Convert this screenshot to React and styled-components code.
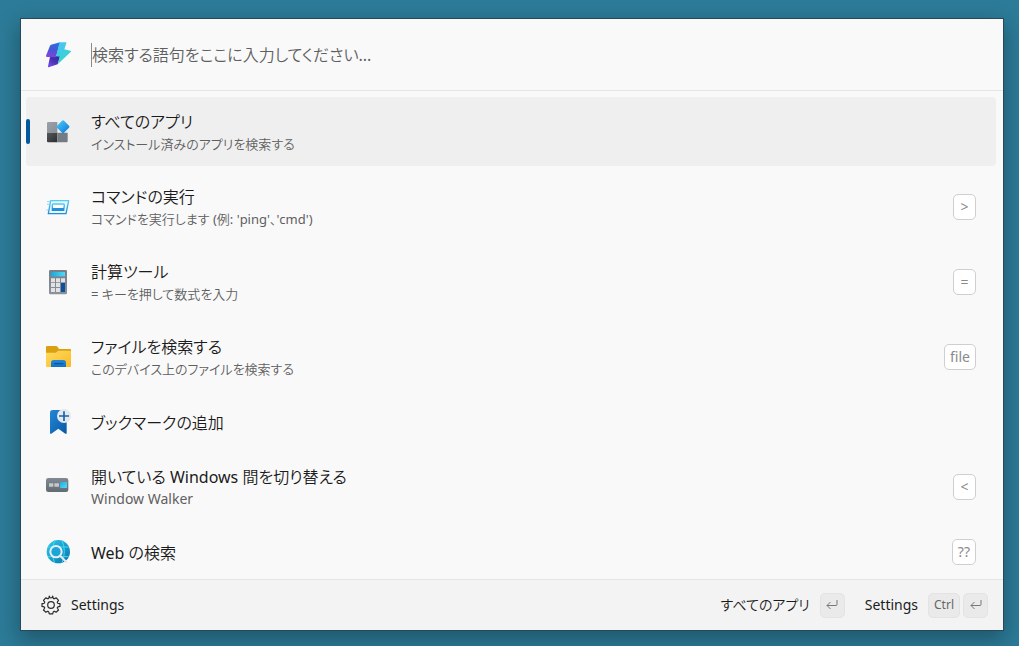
import React, { useState } from 'react';
import styled, { createGlobalStyle } from 'styled-components';

// page defaults...
const GlobalStyle = createGlobalStyle`
  * {
    box-sizing: border-box;
  }
  body {
    margin: 0;
    background-color: #2c7b98;
    font-family: "Noto Sans", "Noto Sans CJK JP DemiLight", "Noto Sans CJK JP", sans-serif;
    font-feature-settings: "palt";
    color: #1b1b1b;
  }
  button, input {
    font: inherit;
    font-feature-settings: inherit;
    color: inherit;
  }
`;

// Styling...
const Desktop = styled.div`
  display: flex;
  min-height: 100vh;
  padding: 19px 16px 16px 21px;
`;

const Palette = styled.main`
  display: flex;
  flex-direction: column;
  flex: 1;
  min-width: 0;
  background-color: #f9f9f9;
  box-shadow: 0 0 0 1px #25495a, 0 8px 20px 2px rgba(0, 0, 0, 0.3);
`;

const SearchBar = styled.label`
  display: flex;
  align-items: center;
  gap: 18px;
  height: 72px;
  padding: 0 22px;
  border-bottom: 1px solid #e5e5e5;
`;

const SearchInput = styled.input`
  flex: 1;
  min-width: 0;
  height: 24px;
  padding: 0;
  border: none;
  border-left: 1px solid #8a8a8a;
  outline: none;
  background: transparent;
  font-size: 16px;
  &::placeholder {
    color: #5f5f5f;
    opacity: 1;
  }
`;

const List = styled.ul`
  display: flex;
  flex-direction: column;
  flex: 1;
  gap: 6px;
  margin: 0;
  padding: 6px 7px 3px 5px;
  list-style: none;
`;

const Row = styled.button`
  display: flex;
  align-items: center;
  gap: 18px;
  width: 100%;
  height: ${({ $short }) => ($short ? '49px' : '69px')};
  padding: 0 20px 0 0;
  border: none;
  border-radius: 4px;
  background-color: ${({ $active }) => ($active ? '#efefef' : 'transparent')};
  text-align: left;
`;

const IconSlot = styled.span`
  display: flex;
  align-items: center;
  gap: 13px;
  &::before {
    content: "";
    width: 4px;
    height: 25px;
    border-radius: 2px;
    background-color: ${({ $active }) => ($active ? '#005a9e' : 'transparent')};
  }
`;

const Texts = styled.span`
  display: flex;
  flex-direction: column;
  flex: 1;
  min-width: 0;
  padding-top: 2px;
`;

const Title = styled.span`
  font-size: 16px;
  line-height: 22px;
`;

const SubTitle = styled.span`
  font-size: 13px;
  line-height: 22px;
  color: #5f5f5f;
  &:lang(en) {
    font-size: 14px;
  }
`;

const Tag = styled.span`
  display: flex;
  align-items: center;
  justify-content: center;
  min-width: 23px;
  height: 26px;
  padding: 0 5px;
  border: 1px solid #cfcfcf;
  border-radius: 5px;
  background-color: #fff;
  font-size: 14px;
  line-height: 20px;
  color: #8a8a8a;
`;

const Footer = styled.footer`
  display: flex;
  align-items: center;
  justify-content: space-between;
  height: 51px;
  padding: 0 15px 0 20px;
  border-top: 1px solid #e5e5e5;
  background-color: #f3f3f3;
`;

const FooterActions = styled.div`
  display: flex;
  align-items: center;
  gap: 20px;
`;

const FooterButton = styled.button`
  display: flex;
  align-items: center;
  gap: 10px;
  padding: 0;
  border: none;
  background: transparent;
  font-size: 14px;
  line-height: 24px;
`;

const Keys = styled.span`
  display: flex;
  gap: 3px;
`;

const Key = styled.kbd`
  display: flex;
  align-items: center;
  justify-content: center;
  min-width: 25px;
  height: 25px;
  padding: 0 5px;
  border: 1px solid #e3e3e3;
  border-radius: 5px;
  background-color: #eaeaea;
  font-family: inherit;
  font-size: 12px;
  line-height: 16px;
  color: #666;
`;

// Icons...
const Logo = () => (
  <svg width="30" height="30" viewBox="69 62 90 90" aria-hidden="true">
    <defs>
      <linearGradient id="logoA" x1="0.6" y1="0" x2="0.3" y2="1">
        <stop offset="0" stopColor="#2a6fe0" />
        <stop offset="0.5" stopColor="#4657d4" />
        <stop offset="1" stopColor="#8a3fe0" />
      </linearGradient>
      <linearGradient id="logoB" x1="0.2" y1="0" x2="0.6" y2="1">
        <stop offset="0" stopColor="#4cc4f5" />
        <stop offset="1" stopColor="#2fd8c8" />
      </linearGradient>
      <linearGradient id="logoC" x1="0.8" y1="0" x2="0.2" y2="1">
        <stop offset="0" stopColor="#2b2f96" />
        <stop offset="0.5" stopColor="#4a32b4" />
        <stop offset="1" stopColor="#7a48ee" />
      </linearGradient>
    </defs>
    <path d="M90 113l31-5-8 27-27 9q-3 0-2-3z" fill="url(#logoC)" />
    <path d="M93 76l27-7-12 45-27-1q-4-1-3-4l12-30q1-2 3-3z" fill="url(#logoA)" />
    <path d="M119 69h18q3 0 2 3l-6 18 18 4q4 1 1 4l-39 37 7-23-12-1z" fill="url(#logoB)" />
  </svg>
);

const AppsIcon = () => (
  <svg width="30" height="30" viewBox="69 64 90 90" aria-hidden="true">
    <defs>
      <linearGradient id="appsBlue" x1="0" y1="0" x2="1" y2="1">
        <stop offset="0" stopColor="#4fd0fa" />
        <stop offset="1" stopColor="#0a72d8" />
      </linearGradient>
      <linearGradient id="appsDark" x1="0" y1="0" x2="1" y2="1">
        <stop offset="0" stopColor="#55595c" />
        <stop offset="1" stopColor="#2b2e31" />
      </linearGradient>
      <linearGradient id="appsGrey" x1="0" y1="0" x2="1" y2="1">
        <stop offset="0" stopColor="#9aa1a8" />
        <stop offset="1" stopColor="#878e95" />
      </linearGradient>
    </defs>
    <path d="M84 79h28v32H81V82q0-3 3-3z" fill="url(#appsGrey)" />
    <path d="M81 111h31v29H84q-3 0-3-3z" fill="url(#appsDark)" />
    <path d="M112 111h31v26q0 3-3 3h-28z" fill="#747b82" />
    <path d="M126 75q3-3 6 0l15 15q3 3 0 6l-15 15q-3 3-6 0l-15-15q-3-3 0-6z" fill="url(#appsBlue)" />
  </svg>
);

const RunIcon = () => (
  <svg width="30" height="30" viewBox="21 21 90 90" aria-hidden="true">
    <defs>
      <linearGradient id="run" x1="0" y1="0" x2="0" y2="1">
        <stop offset="0" stopColor="#4fcdf7" />
        <stop offset="1" stopColor="#1f8edb" />
      </linearGradient>
    </defs>
    <path d="M44 47h54l-8 39H37z" fill="#e9f7fd" stroke="url(#run)" strokeWidth="4" strokeLinejoin="round" />
    <path d="M52 57h30q3 0 3 3l-2 16H49V60q0-3 3-3z" fill="#fff" stroke="url(#run)" strokeWidth="4" />
    <path d="M49 69h35l-1 7H49z" fill="#2490d8" />
    <path d="M33 50h9M33 58h7M31 75h6" stroke="#8fd6f5" strokeWidth="3" />
  </svg>
);

const CalculatorIcon = () => (
  <svg width="30" height="30" viewBox="21 21 90 90" aria-hidden="true">
    <defs>
      <linearGradient id="calcScreen" x1="0" y1="0" x2="1" y2="0">
        <stop offset="0" stopColor="#1ba8d8" />
        <stop offset="1" stopColor="#50d8f5" />
      </linearGradient>
      <linearGradient id="calcBody" x1="0" y1="0" x2="0" y2="1">
        <stop offset="0" stopColor="#76808a" />
        <stop offset="1" stopColor="#8a929a" />
      </linearGradient>
    </defs>
    <rect x="39" y="30" width="54" height="73" rx="4" fill="url(#calcBody)" />
    <rect x="45" y="36" width="42" height="13" fill="url(#calcScreen)" />
    <path d="M45 55h12v12H45zM60 55h12v12H60zM75 55h12v12H75zM45 69h12v12H45zM60 69h12v12H60zM45 84h12v12H45zM60 84h12v12H60z" fill="#e2e2e2" />
    <path d="M75 69h12v27H75z" fill="#10509a" />
  </svg>
);

const FolderIcon = () => (
  <svg width="30" height="30" viewBox="21 21 90 90" aria-hidden="true">
    <defs>
      <linearGradient id="folder" x1="0" y1="0" x2="1" y2="1">
        <stop offset="0" stopColor="#ffdc60" />
        <stop offset="1" stopColor="#fbb825" />
      </linearGradient>
      <linearGradient id="folderTray" x1="0" y1="0" x2="0" y2="1">
        <stop offset="0" stopColor="#1e88dc" />
        <stop offset="1" stopColor="#1370c4" />
      </linearGradient>
    </defs>
    <path d="M33 33h27q3 0 5 3l4 6h33q3 0 3 3v15H30V36q0-3 3-3z" fill="#dba010" />
    <path d="M30 53h28q3 0 5-3l4-3h35q3 0 3 3v43q0 3-3 3H33q-3 0-3-3z" fill="url(#folder)" />
    <path d="M45 96V83q0-8 8-8h29q8 0 8 8v13z" fill="url(#folderTray)" />
    <path d="M54 86h28" stroke="#0b4f8f" strokeWidth="3" />
  </svg>
);

const BookmarkIcon = () => (
  <svg width="30" height="30" viewBox="21 21 90 90" aria-hidden="true">
    <defs>
      <linearGradient id="bookmark" x1="0" y1="0" x2="1" y2="1">
        <stop offset="0" stopColor="#2288d8" />
        <stop offset="1" stopColor="#0a58a4" />
      </linearGradient>
    </defs>
    <path d="M50 30h34q8 0 8 8v60q0 5-4 3L67 86l-21 15q-4 2-4-3V38q0-8 8-8z" fill="url(#bookmark)" />
    <circle cx="84" cy="48" r="21" fill="#e4e9ee" />
    <path d="M84 34v29M69 48h30" stroke="#1764ab" strokeWidth="5" />
  </svg>
);

const WindowsIcon = () => (
  <svg width="30" height="30" viewBox="21 30 90 90" aria-hidden="true">
    <defs>
      <linearGradient id="walker" x1="0" y1="0" x2="0" y2="1">
        <stop offset="0" stopColor="#818a92" />
        <stop offset="1" stopColor="#626a72" />
      </linearGradient>
      <linearGradient id="walkerBlue" x1="0" y1="0" x2="1" y2="1">
        <stop offset="0" stopColor="#28a8e0" />
        <stop offset="1" stopColor="#50def8" />
      </linearGradient>
    </defs>
    <rect x="30" y="48" width="67" height="42" rx="7" fill="url(#walker)" />
    <rect x="39" y="64" width="13" height="10" rx="1" fill="#c3c8cc" />
    <rect x="55" y="64" width="14" height="10" rx="1" fill="#c3c8cc" />
    <rect x="72" y="60" width="21" height="18" rx="2" fill="url(#walkerBlue)" />
  </svg>
);

const WebIcon = () => (
  <svg width="30" height="30" viewBox="21 21 90 90" aria-hidden="true">
    <defs>
      <linearGradient id="web" x1="0" y1="0" x2="1" y2="1">
        <stop offset="0" stopColor="#30c8ee" />
        <stop offset="0.6" stopColor="#1597c8" />
        <stop offset="1" stopColor="#0c6fae" />
      </linearGradient>
    </defs>
    <circle cx="67" cy="65" r="35" fill="url(#web)" />
    <path d="M36 51h62M36 80h62M56 31q-14 34 0 68M78 31q14 34 0 68" fill="none" stroke="#40d8ee" strokeWidth="3" />
    <circle cx="60" cy="65" r="17" fill="#1ba5d8" stroke="#e8eef2" strokeWidth="6" />
    <path d="M73 78l18 18" stroke="#e8e8e8" strokeWidth="6" strokeLinecap="round" />
  </svg>
);

const GearIcon = () => (
  <svg width="20" height="20" viewBox="0 0 20 20" fill="none" stroke="#2b2b2b" strokeWidth="1.2" strokeLinejoin="round" aria-hidden="true">
    <path d="M8.3 1.1L7.8 3q-.3.9-1.200.6L4.700 2.900 2.500 5.300 3.600 6.900q.4 1-.5 1.400L1 8.700v2.700l2 .5q.9.3.6 1.300L2.500 15l2.200 2.200 1.900-.8q.9-.3 1.200.7l.5 1.800h3.400l.5-1.800q.3-1 1.200-.7l1.900.8 2.200-2.200-1.100-1.800q-.3-1 .6-1.300l2-.5V8.700l-2.100-.4q-.9-.4-.5-1.400l1.100-1.600-2.200-2.400-1.900.7q-.9.300-1.200-.6l-.5-1.900q-.3 1.900-1.700 1.900T8.300 1.100z" />
    <circle cx="10" cy="10" r="3.300" />
  </svg>
);

const EnterIcon = () => (
  <svg width="12" height="12" viewBox="0 0 12 12" fill="none" stroke="#777" strokeWidth="1" aria-label="Enter">
    <path d="M11 1v4.500q0 1-1 1H1M4.500 3L1 6.500 4.500 10" />
  </svg>
);

const commands = [
  { title: 'すべてのアプリ', subtitle: 'インストール済みのアプリを検索する', Icon: AppsIcon },
  { title: 'コマンドの実行', subtitle: "コマンドを実行します (例: 'ping'、'cmd')", Icon: RunIcon, tag: '>' },
  { title: '計算ツール', subtitle: '= キーを押して数式を入力', Icon: CalculatorIcon, tag: '=' },
  { title: 'ファイルを検索する', subtitle: 'このデバイス上のファイルを検索する', Icon: FolderIcon, tag: 'file' },
  { title: 'ブックマークの追加', Icon: BookmarkIcon },
  { title: '開いている Windows 間を切り替える', subtitle: 'Window Walker', lang: 'en', Icon: WindowsIcon, tag: '<' },
  { title: 'Web の検索', Icon: WebIcon, tag: '??' },
];

export default function App() {
  const [query, setQuery] = useState('');
  const [selected, setSelected] = useState(0);

  return (
    <Desktop lang="ja">
      <GlobalStyle />
      <Palette>
        <SearchBar>
          <Logo />
          <SearchInput
            aria-label="検索"
            placeholder="検索する語句をここに入力してください..."
            value={query}
            onChange={(e) => setQuery(e.target.value)}
          />
        </SearchBar>
        <List>
          {commands.map(({ title, subtitle, lang, Icon, tag }, i) => (
            <li key={title}>
              <Row type="button" $active={i === selected} $short={!subtitle} onClick={() => setSelected(i)}>
                <IconSlot $active={i === selected}><Icon /></IconSlot>
                <Texts>
                  <Title>{title}</Title>
                  {subtitle && <SubTitle lang={lang}>{subtitle}</SubTitle>}
                </Texts>
                {tag && <Tag>{tag}</Tag>}
              </Row>
            </li>
          ))}
        </List>
        <Footer>
          <FooterButton type="button"><GearIcon />Settings</FooterButton>
          <FooterActions>
            <FooterButton type="button">
              {commands[selected].title}
              <Keys><Key><EnterIcon /></Key></Keys>
            </FooterButton>
            <FooterButton type="button">
              Settings
              <Keys><Key>Ctrl</Key><Key><EnterIcon /></Key></Keys>
            </FooterButton>
          </FooterActions>
        </Footer>
      </Palette>
    </Desktop>
  );
}
